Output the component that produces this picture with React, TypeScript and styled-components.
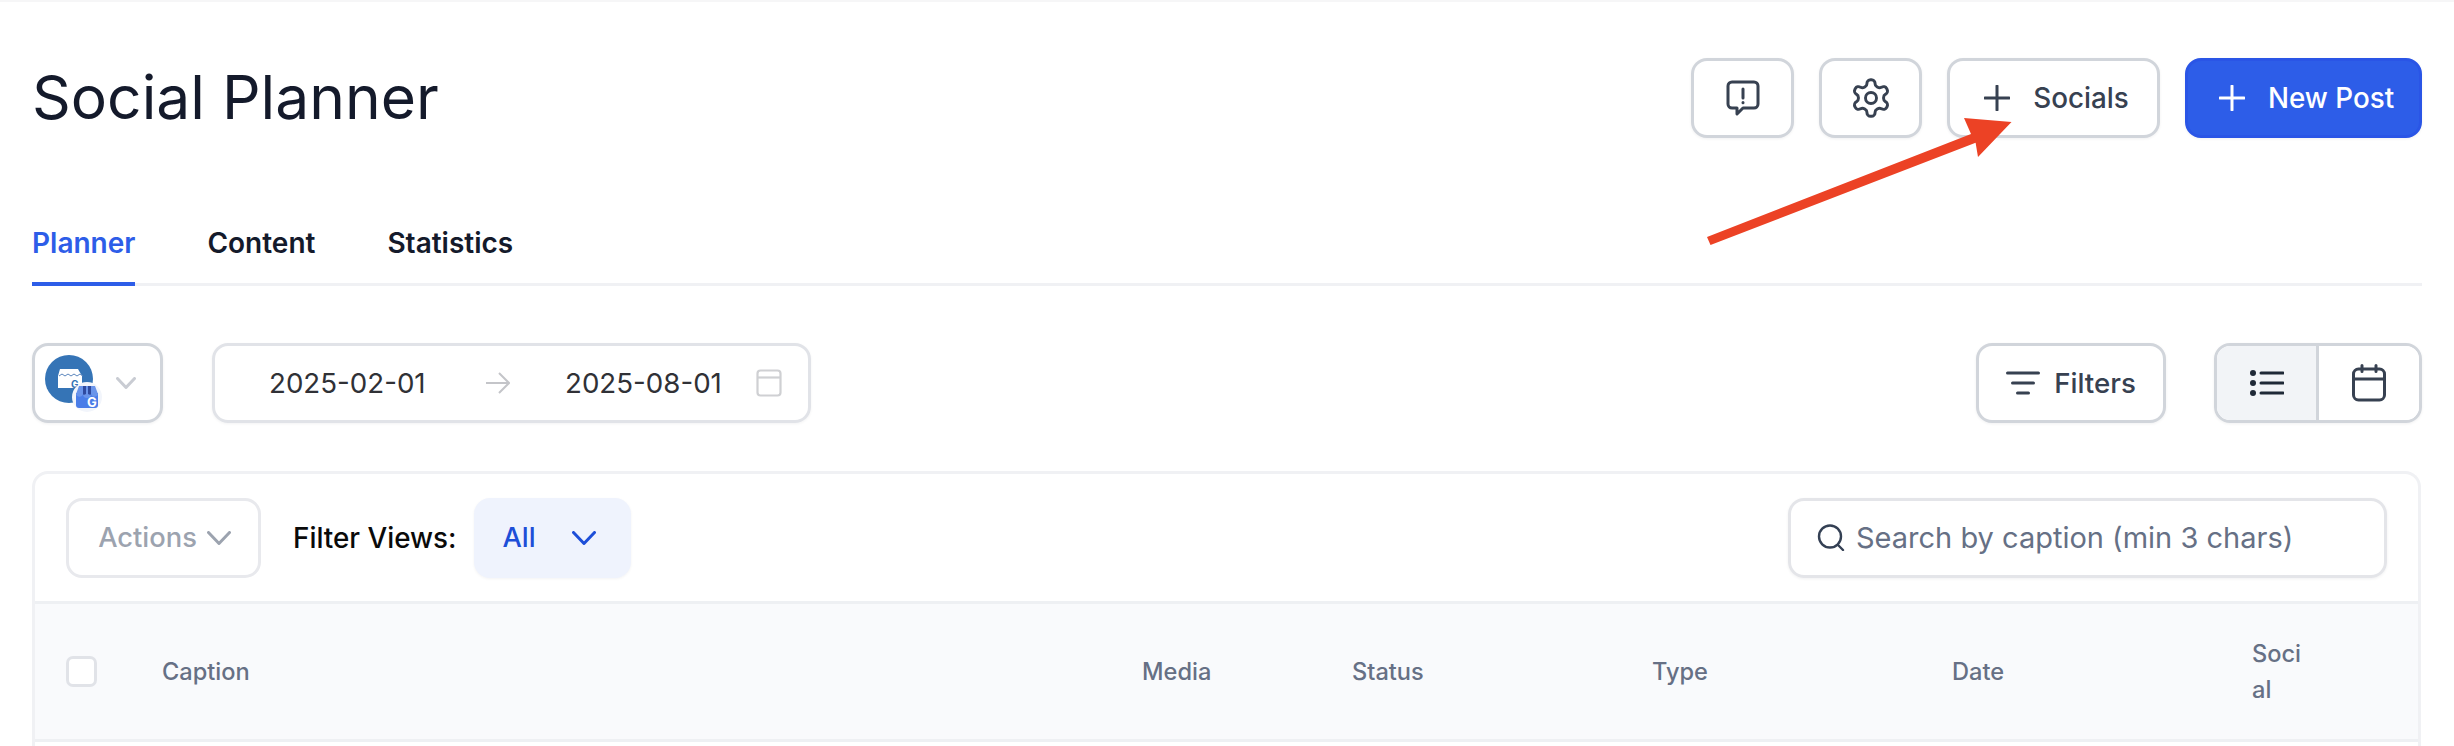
import React from "react";
import styled, { createGlobalStyle } from "styled-components";

const Global = createGlobalStyle`
  html, body { margin: 0; padding: 0; height: 746px; overflow: hidden; background: #fff; }
  body { font-family: Inter, "Liberation Sans", sans-serif; }
  * { box-sizing: border-box; }
`;

const Page = styled.div`
  position: relative;
  width: 2454px;
  height: 746px;
  overflow: hidden;
  padding: 56px 32px 0 32px;
  border-top: 2px solid #f6f6f7;
`;
const Header = styled.header`
  display: flex;
  justify-content: space-between;
  align-items: center;
  height: 80px;
`;
const Title = styled.h1`
  margin: 0 0 2px;
  font-size: 60.5px;
  font-weight: 400;
  color: #141a2b;
  line-height: 1;
`;
const HeaderActions = styled.div`
  display: flex;
  gap: 25px;
`;
const Button = styled.button<{ $w: number; $primary?: boolean }>`
  display: inline-flex;
  align-items: center;
  justify-content: center;
  gap: 23px;
  width: ${(p) => p.$w}px;
  height: 80px;
  padding: 0 0 0 ${(p) => (p.$w > 200 ? 6 : 0)}px;
  border-radius: 16px;
  border: 3px solid ${(p) => (p.$primary ? "#2a55e6" : "#d1d5db")};
  background: ${(p) => (p.$primary ? "#2d5de8" : "#fff")};
  color: ${(p) => (p.$primary ? "#fff" : "#374151")};
  font: 500 27.8px Inter, sans-serif;
  box-shadow: 0 1px 3px rgba(16, 24, 40, 0.06);
`;
const Tabs = styled.nav`
  display: flex;
  gap: 72px;
  height: 92px;
  margin-top: 56px;
  padding-top: 24px;
  border-bottom: 3px solid #f0f1f4;
`;
const Tab = styled.a<{ $active?: boolean }>`
  height: 68px;
  font-size: 28px;
  font-weight: 600;
  line-height: 51px;
  color: ${(p) => (p.$active ? "#2d5de8" : "#141a2b")};
  border-bottom: ${(p) => (p.$active ? "4px solid #2d5de8" : "none")};
`;
const Toolbar = styled.div`
  display: flex;
  align-items: center;
  justify-content: space-between;
  margin-top: 57px;
  height: 80px;
`;
const ToolGroup = styled.div`
  display: flex;
  align-items: center;
  gap: 49px;
`;
const ToolGroupRight = styled(ToolGroup)`
  gap: 48px;
`;
const AccountBox = styled.div`
  display: flex;
  align-items: center;
  width: 131px;
  height: 80px;
  padding-left: 10px;
  gap: 9px;
  border: 3px solid #d1d5db;
  border-radius: 16px;
  box-shadow: 0 1px 3px rgba(16, 24, 40, 0.06);
`;
const Logo = styled.svg`
  margin-top: 8px;
`;
const DateBox = styled.div`
  display: flex;
  align-items: center;
  width: 599px;
  height: 80px;
  padding-left: 54px;
  border: 3px solid #e1e3e8;
  border-radius: 16px;
  color: #303136;
  font-size: 27.7px;
  box-shadow: 0 1px 3px rgba(16, 24, 40, 0.05);
`;
const DateText = styled.span`
  width: 157px;
`;
const DateArrow = styled.svg`
  margin: 0 55px 0 60px;
`;
const DateIcon = styled.svg`
  margin-left: 34px;
`;
const FilterLabel = styled.span`
  color: #374151;
  font: 500 27.7px Inter, sans-serif;
`;
const FilterButton = styled(Button)`
  gap: 14px;
`;
const ViewToggle = styled.div`
  display: flex;
  width: 208px;
  height: 80px;
  border: 3px solid #d1d5db;
  border-radius: 16px;
  overflow: hidden;
  box-shadow: 0 1px 3px rgba(16, 24, 40, 0.06);
`;
const ViewOption = styled.div<{ $active?: boolean }>`
  display: flex;
  align-items: center;
  justify-content: center;
  flex: ${(p) => (p.$active ? "0 0 102px" : "1")};
  background: ${(p) => (p.$active ? "#f2f4f7" : "#fff")};
  border-right: ${(p) => (p.$active ? "3px solid #d1d5db" : "none")};
`;
const Card = styled.section`
  margin-top: 48px;
  margin-right: 1px;
  height: 320px;
  border: 3px solid #f0f1f4;
  border-bottom: none;
  border-radius: 16px 16px 0 0;
  overflow: hidden;
`;
const CardBar = styled.div`
  display: flex;
  align-items: center;
  height: 130px;
  padding: 0 31px 0 31px;
  border-bottom: 3px solid #eef0f3;
`;
const ActionsButton = styled.div`
  display: flex;
  align-items: center;
  justify-content: center;
  gap: 10px;
  width: 195px;
  height: 80px;
  padding-left: 2px;
  border: 3px solid #e8e9ed;
  border-radius: 16px;
  color: #9ca3af;
  font-size: 27.3px;
  font-weight: 500;
`;
const ViewsLabel = styled.span`
  margin-left: 32px;
  font-size: 27.8px;
  font-weight: 500;
  color: #0a0a0a;
`;
const ViewsSelect = styled.div`
  display: flex;
  align-items: center;
  width: 157px;
  height: 80px;
  margin-left: 17px;
  padding-left: 29px;
  gap: 36px;
  border-radius: 16px;
  background: #eff3fd;
  color: #1d4ed8;
  font-size: 27.3px;
  font-weight: 500;
  box-shadow: 0 1px 3px rgba(16, 24, 40, 0.05);
`;
const SearchBox = styled.div`
  display: flex;
  align-items: center;
  gap: 11px;
  width: 599px;
  height: 80px;
  margin-left: auto;
  padding-left: 26px;
  border: 3px solid #e4e5e9;
  border-radius: 16px;
  color: #667085;
  font-size: 29px;
  box-shadow: 0 1px 3px rgba(16, 24, 40, 0.06);
`;
const HeadRow = styled.div`
  display: grid;
  grid-template-columns: 96px 980px 210px 300px 300px 300px 60px;
  align-items: center;
  height: 138px;
  padding-left: 31px;
  background: #f9fafc;
  border-bottom: 3px solid #eef0f3;
  color: #667085;
  font-size: 23.6px;
  font-weight: 500;
  line-height: 36px;
`;
const Check = styled.span`
  display: block;
  width: 31px;
  height: 31px;
  background: #fff;
  border: 3px solid #e1e3e8;
  border-radius: 7px;
`;
const WrapCell = styled.span`
  word-break: break-all;
  width: 56px;
`;
const Overlay = styled.svg`
  position: absolute;
  left: 0;
  top: -2px;
  pointer-events: none;
`;

const PlusIcon = ({ color }: { color: string }) => (
  <svg width="26" height="26" viewBox="0 0 26 26" fill="none" stroke={color} strokeWidth="3" strokeLinecap="round">
    <path d="M13 1v24M1 13h24" />
  </svg>
);

const Chevron = ({ w, h, color }: { w: number; h: number; color: string }) => (
  <svg width={w} height={h} viewBox={`0 0 ${w} ${h}`} fill="none" stroke={color} strokeWidth="3" strokeLinecap="round" strokeLinejoin="round">
    <path d={`M1.5 1.5L${w / 2} ${h - 1.5}L${w - 1.5} 1.5`} />
  </svg>
);

const GearIcon = () => (
  <svg width="44" height="44" viewBox="0 0 24 24" fill="none" stroke="#374151" strokeWidth="1.6" strokeLinecap="round" strokeLinejoin="round">
    <path d="M12.22 2h-.44a2 2 0 0 0-2 2v.18a2 2 0 0 1-1 1.73l-.43.25a2 2 0 0 1-2 0l-.15-.08a2 2 0 0 0-2.73.73l-.22.38a2 2 0 0 0 .73 2.73l.15.1a2 2 0 0 1 1 1.72v.51a2 2 0 0 1-1 1.74l-.15.09a2 2 0 0 0-.73 2.73l.22.38a2 2 0 0 0 2.73.73l.15-.08a2 2 0 0 1 2 0l.43.25a2 2 0 0 1 1 1.73V20a2 2 0 0 0 2 2h.44a2 2 0 0 0 2-2v-.18a2 2 0 0 1 1-1.73l.43-.25a2 2 0 0 1 2 0l.15.08a2 2 0 0 0 2.73-.73l.22-.39a2 2 0 0 0-.73-2.73l-.15-.08a2 2 0 0 1-1-1.74v-.5a2 2 0 0 1 1-1.74l.15-.09a2 2 0 0 0 .73-2.73l-.22-.38a2 2 0 0 0-2.73-.73l-.15.08a2 2 0 0 1-2 0l-.43-.25a2 2 0 0 1-1-1.73V4a2 2 0 0 0-2-2z" />
    <circle cx="12" cy="12" r="3" />
  </svg>
);

const GmbLogo = () => (
  <Logo width="62" height="64" viewBox="0 0 62 64">
    <circle cx="24" cy="24" r="24" fill="#3574b6" />
    <path d="M15 14h18l4 7v12H13V21z" fill="#fff" />
    <path d="M14 21l3-2 3 2 3-2 3 2 3-2 3 2 3-2 3 2" fill="none" stroke="#5b86bd" strokeWidth="1" />
    <text x="26" y="33" fontSize="10" fontWeight="700" fontFamily="Inter, sans-serif" fill="#3574b6">G</text>
    <circle cx="42" cy="42" r="15" fill="#f2f5fb" />
    <path d="M31 38h22v12a3 3 0 0 1-3 3H34a3 3 0 0 1-3-3z" fill="#4a7de8" />
    <path d="M34 31h16l3 8a3.600 3.600 0 0 1-7 0 4 4 0 0 1-8 0 3.600 3.600 0 0 1-7 0z" fill="#6a94ea" />
    <path d="M38 31h3v8a3.600 3.600 0 0 1-3 .5zM43 31h3v8.500a3.600 3.600 0 0 1-3-.5z" fill="#2f4a9f" />
    <text x="42" y="52" fontSize="13" fontWeight="700" fontFamily="Inter, sans-serif" fill="#fff">G</text>
  </Logo>
);

export default function App() {
  return (
    <Page>
      <Global />
      <Header>
        <Title>Social Planner</Title>
        <HeaderActions>
          <Button $w={103} aria-label="Feedback">
            <svg width="34" height="36" viewBox="0 0 34 36" fill="none" stroke="#374151" strokeWidth="3" strokeLinejoin="round" strokeLinecap="round">
              <path d="M6 2h22a4 4 0 0 1 4 4v18a4 4 0 0 1-4 4H17l-6 6v-6H6a4 4 0 0 1-4-4V6a4 4 0 0 1 4-4z" />
              <path d="M17 9v9M17 22.500v.2" />
            </svg>
          </Button>
          <Button $w={103} aria-label="Settings">
            <GearIcon />
          </Button>
          <Button $w={213}>
            <PlusIcon color="#374151" />
            <span>Socials</span>
          </Button>
          <Button $w={237} $primary>
            <PlusIcon color="#fff" />
            <span>New Post</span>
          </Button>
        </HeaderActions>
      </Header>
      <Tabs>
        <Tab $active>Planner</Tab>
        <Tab>Content</Tab>
        <Tab>Statistics</Tab>
      </Tabs>
      <Toolbar>
        <ToolGroup>
          <AccountBox>
            <GmbLogo />
            <Chevron w={20} h={12} color="#c9ccd3" />
          </AccountBox>
          <DateBox>
            <DateText>2025-02-01</DateText>
            <DateArrow width="24" height="22" viewBox="0 0 24 22" fill="none" stroke="#c4c5c9" strokeWidth="2">
              <path d="M0 11h23M13 1l10 10-10 10" />
            </DateArrow>
            <DateText>2025-08-01</DateText>
            <DateIcon width="26" height="28" viewBox="0 0 26 28" fill="none" stroke="#cfd0d3" strokeWidth="2.2">
              <rect x="1.500" y="1.500" width="23" height="25" rx="3" />
              <path d="M1.500 8.500h23" />
            </DateIcon>
          </DateBox>
        </ToolGroup>
        <ToolGroupRight>
          <FilterButton as="div" $w={190}>
            <svg width="34" height="24" viewBox="0 0 34 24" fill="none" stroke="#374151" strokeWidth="3" strokeLinecap="round">
              <path d="M1.500 2h31M6.500 12h21M11.500 22h11" />
            </svg>
            <FilterLabel>Filters</FilterLabel>
          </FilterButton>
          <ViewToggle>
            <ViewOption $active>
              <svg width="34" height="26" viewBox="0 0 34 26" fill="none" stroke="#1f2937" strokeWidth="3" strokeLinecap="round">
                <path d="M11 3h22M11 13h22M11 23h22" />
                <g fill="#1f2937" stroke="none">
                  <circle cx="3" cy="3" r="3" />
                  <circle cx="3" cy="13" r="3" />
                  <circle cx="3" cy="23" r="3" />
                </g>
              </svg>
            </ViewOption>
            <ViewOption>
              <svg width="34" height="38" viewBox="0 0 34 38" fill="none" stroke="#374151" strokeWidth="3" strokeLinecap="round" strokeLinejoin="round">
                <rect x="1.500" y="5" width="31" height="31" rx="5" />
                <path d="M1.500 15h31M10 1.500v6M24 1.500v6" />
              </svg>
            </ViewOption>
          </ViewToggle>
        </ToolGroupRight>
      </Toolbar>
      <Card>
        <CardBar>
          <ActionsButton>
            Actions
            <Chevron w={24} h={14} color="#9ca3af" />
          </ActionsButton>
          <ViewsLabel>Filter Views:</ViewsLabel>
          <ViewsSelect>
            All
            <Chevron w={24} h={14} color="#1d4ed8" />
          </ViewsSelect>
          <SearchBox>
            <svg width="28" height="27" viewBox="0 0 28 27" fill="none" stroke="#344054" strokeWidth="2.4" strokeLinecap="round">
              <circle cx="13" cy="12.500" r="11" />
              <path d="M21 21l5 5" />
            </svg>
            Search by caption (min 3 chars)
          </SearchBox>
        </CardBar>
        <HeadRow>
          <Check />
          <span>Caption</span>
          <span>Media</span>
          <span>Status</span>
          <span>Type</span>
          <span>Date</span>
          <WrapCell>Social</WrapCell>
        </HeadRow>
      </Card>
      <Overlay width="2454" height="746" viewBox="0 0 2454 746">
        <path d="M1707 237L1971 134L1964 118L2011.500 122L1978 157L1975.600 142.700L1710.500 245Z" fill="#ec4225" />
      </Overlay>
    </Page>
  );
}
